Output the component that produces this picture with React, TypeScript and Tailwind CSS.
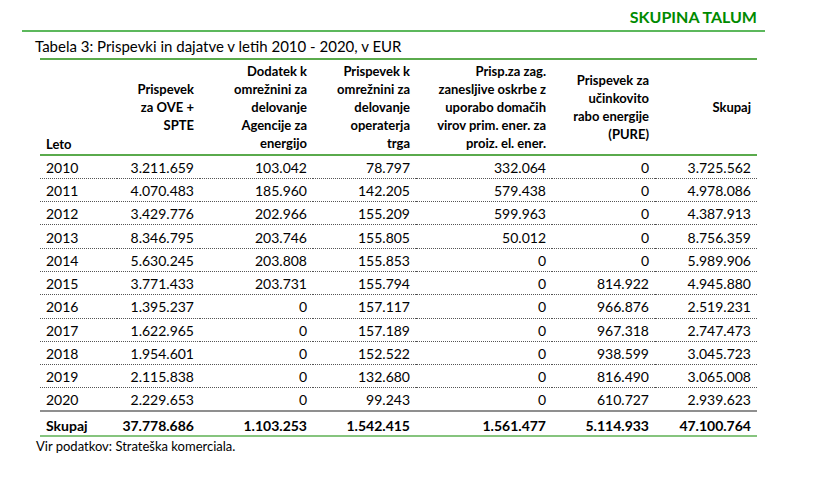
import React from 'react';

const rows: string[][] = [
  ["2010", "3.211.659", "103.042", "78.797", "332.064", "0", "3.725.562"],
  ["2011", "4.070.483", "185.960", "142.205", "579.438", "0", "4.978.086"],
  ["2012", "3.429.776", "202.966", "155.209", "599.963", "0", "4.387.913"],
  ["2013", "8.346.795", "203.746", "155.805", "50.012", "0", "8.756.359"],
  ["2014", "5.630.245", "203.808", "155.853", "0", "0", "5.989.906"],
  ["2015", "3.771.433", "203.731", "155.794", "0", "814.922", "4.945.880"],
  ["2016", "1.395.237", "0", "157.117", "0", "966.876", "2.519.231"],
  ["2017", "1.622.965", "0", "157.189", "0", "967.318", "2.747.473"],
  ["2018", "1.954.601", "0", "152.522", "0", "938.599", "3.045.723"],
  ["2019", "2.115.838", "0", "132.680", "0", "816.490", "3.065.008"],
  ["2020", "2.229.653", "0", "99.243", "0", "610.727", "2.939.623"],
];

const total = ["Skupaj", "37.778.686", "1.103.253", "1.542.415", "1.561.477", "5.114.933", "47.100.764"];

const headers: string[][] = [
  ["Prispevek", "za OVE +", "SPTE"],
  ["Dodatek k", "omrežnini za", "delovanje", "Agencije za", "energijo"],
  ["Prispevek k", "omrežnini za", "delovanje", "operaterja", "trga"],
  ["Prisp.za zag.", "zanesljive oskrbe z", "uporabo domačih", "virov prim. ener. za", "proiz. el. ener."],
  ["Prispevek za", "učinkovito", "rabo energije", "(PURE)"],
  ["Skupaj"],
];

export default function App() {
  return (
    <div className="w-[813px] h-[478px] bg-white text-black font-['Lato','Open_Sans',sans-serif]">
      <div className="ml-[22px] w-[743px] pt-[5px] pb-[1px] pr-[8px] text-right border-b-2 border-[#5cb85c]">
        <span className="text-[16px] font-bold text-[#008a00] leading-[20px]">SKUPINA TALUM</span>
      </div>
      <div className="ml-[35px] mt-[4px] text-[15px] leading-[20px]">Tabela 3: Prispevki in dajatve v letih 2010 - 2020, v EUR</div>
      <table className="ml-[40px] mt-[2px] w-[717px] table-fixed border-collapse">
        <colgroup>
          <col className="w-[77px]" />
          <col className="w-[83px]" />
          <col className="w-[113px]" />
          <col className="w-[103px]" />
          <col className="w-[136px]" />
          <col className="w-[103px]" />
          <col className="w-[102px]" />
        </colgroup>
        <thead>
          <tr className="h-[96px] border-t-2 border-b-2 border-[#5aaa4c]">
            <th className="align-bottom text-left pl-[6px] pb-[1px] text-[13px] font-bold leading-[18px]">Leto</th>
            {headers.map((h, i) => (
              <th key={i} className="align-middle text-right pr-[6px] text-[13px] font-bold leading-[18px]">
                {h.map((line, j) => (
                  <div key={j} className="whitespace-nowrap">{line}</div>
                ))}
              </th>
            ))}
          </tr>
        </thead>
        <tbody>
          {rows.map((r, i) => (
            <tr
              key={r[0]}
              className={i === rows.length - 1 ? "h-[23.3px] border-b-2 border-[#8f8f8f]" : "h-[23.3px] border-b border-dotted border-[#555]"}
            >
              {r.map((c, j) => (
                <td key={j} className={j === 0 ? "text-left pl-[6px] pt-[2px] text-[14px] leading-[18px]" : "text-right pr-[6px] pt-[2px] text-[14px] leading-[18px]"}>
                  {c}
                </td>
              ))}
            </tr>
          ))}
          <tr className="h-[25px] border-b-2 border-[#86c47e]">
            {total.map((c, j) => (
              <td key={j} className={j === 0 ? "text-left pl-[6px] pt-[4px] text-[14px] font-bold leading-[18px]" : "text-right pr-[6px] pt-[4px] text-[14px] font-bold leading-[18px]"}>
                {c}
              </td>
            ))}
          </tr>
        </tbody>
      </table>
      <div className="ml-[36px] text-[13px] leading-[18px]">Vir podatkov: Strateška komerciala.</div>
    </div>
  );
}
